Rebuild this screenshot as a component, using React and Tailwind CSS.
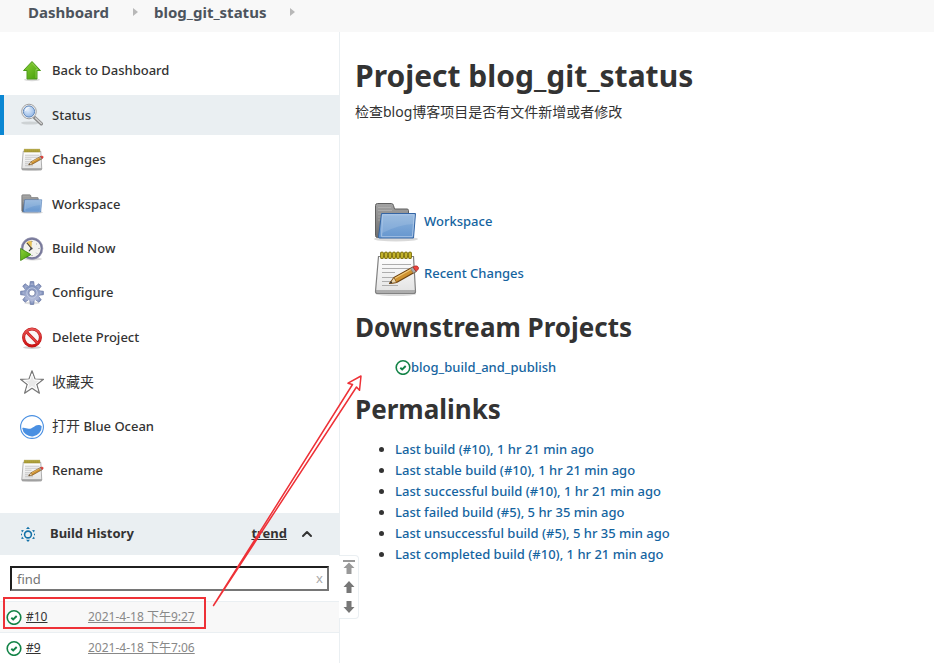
import { ChevronUp } from "lucide-react";

const TASKS = [
  { label: "Back to Dashboard", icon: UpArrowIcon },
  { label: "Status", icon: SearchIcon, active: true },
  { label: "Changes", icon: NotepadIcon },
  { label: "Workspace", icon: FolderIcon },
  { label: "Build Now", icon: ClockIcon },
  { label: "Configure", icon: GearIcon },
  { label: "Delete Project", icon: DeleteIcon },
  { zh: "收藏夹", label: "", icon: StarIcon },
  { zh: "打开", label: " Blue Ocean", icon: OceanIcon },
  { label: "Rename", icon: NotepadIcon },
];

const BUILDS = [
  { id: "#10", date: "2021-4-18 下午9:27" },
  { id: "#9", date: "2021-4-18 下午7:06" },
];

const PERMALINKS = [
  "Last build (#10), 1 hr 21 min ago",
  "Last stable build (#10), 1 hr 21 min ago",
  "Last successful build (#10), 1 hr 21 min ago",
  "Last failed build (#5), 5 hr 35 min ago",
  "Last unsuccessful build (#5), 5 hr 35 min ago",
  "Last completed build (#10), 1 hr 21 min ago",
];

// Shared gradients, referenced by id from the icons below
function IconDefs() {
  return (
    <svg width="0" height="0" className="absolute" aria-hidden="true">
      <defs>
        <linearGradient id="green" x1="0" y1="0" x2="1" y2="1">
          <stop offset="0" stopColor="#8fd33a" />
          <stop offset="1" stopColor="#3f9a06" />
        </linearGradient>
        <linearGradient id="paper" x1="0" y1="0" x2="0" y2="1">
          <stop offset="0" stopColor="#ffffff" />
          <stop offset="1" stopColor="#e2e2e2" />
        </linearGradient>
        <linearGradient id="folderFront" x1="0" y1="0" x2="0" y2="1">
          <stop offset="0" stopColor="#8fb4dc" />
          <stop offset="1" stopColor="#6596cf" />
        </linearGradient>
        <linearGradient id="folderBack" x1="0" y1="0" x2="0" y2="1">
          <stop offset="0" stopColor="#a3a3a3" />
          <stop offset="1" stopColor="#6d6d6d" />
        </linearGradient>
        <linearGradient id="gear" x1="0" y1="0" x2="0" y2="1">
          <stop offset="0" stopColor="#7c8fba" />
          <stop offset="1" stopColor="#b4bcda" />
        </linearGradient>
        <linearGradient id="red" x1="0" y1="0" x2="0" y2="1">
          <stop offset="0" stopColor="#e65252" />
          <stop offset="1" stopColor="#cf1212" />
        </linearGradient>
        <radialGradient id="lens" cx="0.4" cy="0.35" r="0.7">
          <stop offset="0" stopColor="#e6f0fc" />
          <stop offset="1" stopColor="#8fb5e6" />
        </radialGradient>
      </defs>
    </svg>
  );
}

function UpArrowIcon({ className }) {
  return (
    <svg viewBox="0 0 24 24" className={className}>
      <ellipse cx="12" cy="20.8" rx="8" ry="1.5" fill="#000" opacity="0.15" />
      <path d="M12 2.500 20.500 11.500H17V20H7v-8.500H3.500z" fill="url(#green)" stroke="#4e9a1c" strokeLinejoin="round" />
      <path d="M12 4.200 18 10.500h-2V19" fill="none" stroke="#b7e682" strokeWidth="0.7" opacity="0.7" />
    </svg>
  );
}

function SearchIcon({ className }) {
  return (
    <svg viewBox="0 0 24 24" className={className}>
      <ellipse cx="10" cy="20" rx="9" ry="1.6" fill="#000" opacity="0.12" />
      <path d="m14.500 14.500 6.800 6.300" stroke="#858585" strokeWidth="3.4" strokeLinecap="round" />
      <path d="m15.500 15 5.800 5.500" stroke="#d0d0d0" strokeWidth="1.6" strokeLinecap="round" />
      <circle cx="9" cy="8.500" r="7.300" fill="#f3f3f3" stroke="#a2a2a2" />
      <circle cx="9" cy="8.500" r="5.600" fill="url(#lens)" stroke="#5f86b8" />
      <path d="M5.500 8a4 4 0 0 1 4-3.500" fill="none" stroke="#fff" strokeWidth="1.2" opacity="0.8" />
    </svg>
  );
}

function NotepadIcon({ className }) {
  return (
    <svg viewBox="0 0 48 48" className={className}>
      <ellipse cx="24" cy="44" rx="20" ry="2" fill="#000" opacity="0.15" />
      <path d="M6.500 6.500h35l2 35q0 2-2 2h-36q-2 0-2-2z" fill="url(#paper)" stroke="#808080" strokeWidth="1.200" />
      <path d="M4 40h39.500v2q0 1.500-2 1.500h-36q-2 0-2-1.500z" fill="#888" opacity="0.6" />
      <path d="M10 14.500h29M10 18.500h29M10 22.500h13M10 27.500h20M10 31.500h11M10 35.500h16" stroke="#adadad" strokeWidth="1.200" />
      {[9, 13, 17, 21, 25, 29, 33, 37].map((x) => (
        <rect key={x} x={x - 0.3} y="2" width="2.600" height="6.500" rx="1.300" fill="#e3d23a" stroke="#7d6f08" strokeWidth="1.200" />
      ))}
      <path d="m17.500 33.500 4.500-6 19-10.500 3 4.500-19.500 11z" fill="#cf9230" stroke="#6d4312" strokeWidth="1.200" strokeLinejoin="round" />
      <path d="m22.500 28.500 18-10" stroke="#f0c878" strokeWidth="1.300" />
      <path d="m17.500 33.500 4.500-6 2.500 5z" fill="#ead7ae" stroke="#805019" strokeWidth="0.700" />
      <path d="m17.500 33.500 1.800-2.400.9 1.800z" fill="#333" />
      <path d="m38.500 18.500 2.500-1.400 3 4.400-2.600 1.500z" fill="#aaa" stroke="#777" strokeWidth="0.600" />
      <path d="m41 17 2-1q2.800-.7 3.600 1.800.4 1.800-2.600 3.500z" fill="#ee443c" stroke="#a22525" strokeWidth="0.700" />
    </svg>
  );
}

function FolderIcon({ className }) {
  return (
    <svg viewBox="0 0 48 48" className={className}>
      <ellipse cx="24" cy="41" rx="22" ry="2.500" fill="#000" opacity="0.15" />
      <path d="M3.500 7.500q0-2 2-2h14q1.500 0 2 2l1 3.500h12.500q1.500 0 1.500 1.500v27h-31q-2 0-2-2z" fill="url(#folderBack)" stroke="#5f5f5f" />
      <path d="M6 9.500h13M6 12.500h14M6 16h29M6 19h5M6 22h2" stroke="#c2c2c2" strokeWidth="0.700" opacity="0.7" />
      <path d="M9.500 15.500h34l-2 24.500h-34q-1 0-1-1z" fill="url(#folderFront)" stroke="#3465a4" strokeLinejoin="round" />
      <path d="M10.500 16.700h31.700l-1.800 22H9.600z" fill="none" stroke="#b5cdea" strokeWidth="0.800" />
      <path d="M11 17h31l-.8 9q-14 .5-31 9z" fill="#fff" opacity="0.120" />
    </svg>
  );
}

function ClockIcon({ className }) {
  return (
    <svg viewBox="0 0 24 24" className={className}>
      <ellipse cx="13" cy="22" rx="9" ry="1.500" fill="#000" opacity="0.15" />
      <circle cx="12" cy="11.500" r="9.800" fill="#f3f3ee" stroke="#77789a" strokeWidth="2.200" />
      <circle cx="12" cy="11.500" r="10.900" fill="none" stroke="#9c9cb4" strokeWidth="0.600" />
      <path d="M11.500 11 6 6q2.500-2.500 6-2.200z" fill="#e7c35a" />
      <path d="M12 4v1M12 18v1M18.500 11.500h1M17 6.500l-.7.700M17 16.500l-.7-.7" stroke="#888" />
      <path d="m7 6 4.500 5.500-2.500 2.500" fill="none" stroke="#444" strokeWidth="1.100" />
      <circle cx="11.500" cy="11.500" r="1.100" fill="#444" />
      <path d="m.6 11.500 10.400 6L.6 23.500z" fill="url(#green)" stroke="#388307" strokeWidth="0.800" strokeLinejoin="round" />
    </svg>
  );
}

function GearIcon({ className }) {
  return (
    <svg viewBox="0 0 24 24" className={className}>
      <ellipse cx="12" cy="22" rx="8" ry="1.500" fill="#000" opacity="0.12" />
      {[0, 45, 90, 135, 180, 225, 270, 315].map((deg) => (
        <path key={deg} d="M9.800 5 10.300.6h3.400L14.200 5z" transform={`rotate(${deg} 12 12)`} fill="url(#gear)" stroke="#6674a0" strokeWidth="0.700" />
      ))}
      <circle cx="12" cy="12" r="8" fill="url(#gear)" />
      <circle cx="12" cy="12" r="5.200" fill="none" stroke="#c8d0e6" strokeWidth="0.800" />
      <circle cx="12" cy="12" r="3.200" fill="#fff" stroke="#707da5" strokeWidth="0.900" />
    </svg>
  );
}

function DeleteIcon({ className }) {
  return (
    <svg viewBox="0 0 24 24" className={className}>
      <ellipse cx="12" cy="21.500" rx="9" ry="1.500" fill="#000" opacity="0.18" />
      <circle cx="12" cy="11.500" r="8.400" fill="#faf6f6" stroke="#b91414" strokeWidth="3" />
      <path d="m6.300 5.800 11.400 11.400" stroke="#c51616" strokeWidth="3" />
      <circle cx="12" cy="11.500" r="8.400" fill="none" stroke="url(#red)" strokeWidth="2" />
      <path d="m6.300 5.800 11.400 11.400" stroke="#e04040" strokeWidth="1.900" />
    </svg>
  );
}

function StarIcon({ className }) {
  return (
    <svg viewBox="0 0 24 24" className={className}>
      <path
        d="m12 .8 3 8.200 8.500.3-6.700 5.200 2.600 8.700L12 18.300l-7.400 4.900 2.600-8.700L.5 9.300 9 9z"
        fill="#f4f4f4"
        stroke="#777"
        strokeWidth="1.200"
        strokeLinejoin="round"
      />
      <path d="m12 4 2.200 6 6 .4-4.800 3.800 1.700 5.700L12 16.500l-5.100 3.400 1.700-5.700-4.800-3.800 6-.4z" fill="#e9e9e9" stroke="#fff" strokeWidth="0.900" />
    </svg>
  );
}

function OceanIcon({ className }) {
  return (
    <svg viewBox="0 0 24 24" className={className}>
      <circle cx="12" cy="12" r="11.400" fill="#fff" stroke="#4a90e2" strokeWidth="1.100" />
      <path d="M2.200 13c2.500-.8 4 .7 6.500.8 4 .2 6-3.800 9.500-3.800 1.600 0 2.700.6 3.500 1.200A9.800 9.800 0 0 1 2.200 13z" fill="#4a90e2" />
    </svg>
  );
}

function SuccessIcon() {
  return (
    <svg viewBox="0 0 16 16" className="size-4 shrink-0" role="img" aria-label="Success">
      <circle cx="8" cy="8.500" r="6.800" fill="#fff" stroke="#138347" strokeWidth="1.600" />
      <path d="m5.300 8.700 1.900 1.800 3.500-3.500" fill="none" stroke="#138347" strokeWidth="1.900" />
    </svg>
  );
}

function WeatherIcon() {
  return (
    <svg viewBox="0 0 16 16" className="size-4 shrink-0">
      <circle cx="8" cy="8.500" r="3.400" fill="none" stroke="#1572a8" strokeWidth="1.600" />
      <path d="m8 .8 2 2.200H6zM8 16l2-2.200H6z" fill="#1572a8" />
      <path d="M1.300 4 4 4.300 2 6.500zM14.700 4 12 4.300l2 2.200zM1.300 13 4 12.700l-2-2.200zM14.700 13l-2.700-.3 2-2.200z" fill="#1572a8" />
      <path d="M1.500 7.700v1.600M14.500 7.700v1.600" stroke="#1572a8" />
    </svg>
  );
}

function PageButton({ label, variant }) {
  return (
    <button type="button" aria-label={label} className="block">
      <svg viewBox="0 0 12 14" className={variant === "top" ? "h-3.5 w-3 text-[#999]" : "h-3.5 w-3 text-[#777]"} fill="currentColor">
        {variant === "top" && <path d="M0 0h12v2H0zM6 2.500l5.500 5.500H8.500v6h-5V8H.5z" />}
        {variant === "up" && <path d="m6 1 5.500 6H8.500v6h-5V7H.5z" />}
        {variant === "down" && <path d="m6 13 5.500-6H8.500V1h-5v6H.5z" />}
      </svg>
    </button>
  );
}

function Breadcrumbs() {
  return (
    <nav className="flex h-8 items-start bg-[#f8f8f8] pl-7 text-[15px] font-bold text-[#4d545d]">
      <a href="#dashboard" className="leading-6">Dashboard</a>
      <Separator />
      <a href="#job" className="leading-6">blog_git_status</a>
      <Separator />
    </nav>
  );
}

function Separator() {
  return (
    <svg viewBox="0 0 5 8" className="ml-6 mr-4 mt-2 h-2 w-[5px]" fill="#b8b8b8">
      <path d="M0 0v8l5-4z" />
    </svg>
  );
}

function BuildHistory() {
  return (
    <section className="mt-[22px]">
      <div className="relative flex h-[42px] items-center bg-[#eaeff2] pl-5 pr-6 font-bold">
        <WeatherIcon />
        <h2 className="ml-3.5">Build History</h2>
        <a href="#trend" className="ml-auto underline">trend</a>
        <button type="button" aria-label="Collapse" className="ml-3">
          <ChevronUp size={16} strokeWidth={3} />
        </button>
        <div className="absolute left-full top-full flex h-16 w-5 flex-col items-center justify-center gap-1.5 rounded-r border border-l-0 border-[#eaeff2] bg-white">
          <PageButton label="Newest" variant="top" />
          <PageButton label="Newer" variant="up" />
          <PageButton label="Older" variant="down" />
        </div>
      </div>
      <div className="relative mx-2.5 mb-2.5 mt-[11px]">
        <input
          type="text"
          placeholder="find"
          aria-label="find"
          className="block h-[25px] w-full border-2 border-b-[#767676] border-l-[#1f1f1f] border-r-[#767676] border-t-[#1f1f1f] pl-[5px] font-normal placeholder:text-[#757575]"
        />
        <button type="button" aria-label="Clear" className="absolute right-1.5 top-0 text-[13px] font-normal leading-6 text-[#aaa]">
          x
        </button>
      </div>
      <table className="w-full border-collapse text-xs font-normal">
        <tbody>
          {BUILDS.map((build) => (
            <tr key={build.id} className="h-[31px] border-t border-[#eaeff2] odd:bg-[#f8f8f8]">
              <td className="w-[88px] p-0 pl-1.5">
                <div className="flex items-center gap-1">
                  <SuccessIcon />
                  <a href="#build" className="underline">{build.id}</a>
                </div>
              </td>
              <td className="p-0 text-[#888]">
                <a href="#build" className="underline">{build.date}</a>
              </td>
            </tr>
          ))}
        </tbody>
      </table>
    </section>
  );
}

function Sidebar() {
  return (
    <aside className="w-[340px] shrink-0 border-r border-[#eaeff2] pt-[19px]">
      <nav className="flex h-[440px] flex-col justify-between">
        {TASKS.map(({ zh, label, icon: Icon, active }) => (
          <a
            key={zh || label}
            href="#task"
            className={
              active
                ? "flex h-10 items-center gap-2 border-l-4 border-[#0b87d3] bg-[#eaeff2] pl-4"
                : "flex h-10 items-center gap-2 pl-5"
            }
          >
            <Icon className="size-6 shrink-0" />
            <span>
              {zh && <span className="text-sm font-normal">{zh}</span>}
              {label}
            </span>
          </a>
        ))}
      </nav>
      <BuildHistory />
    </aside>
  );
}

function Main() {
  return (
    <main className="min-w-0 flex-1 pl-[15px] pr-4 pt-6">
      <h1 className="text-[30px] font-bold leading-10">Project blog_git_status</h1>
      <p className="mt-1.5 text-sm font-normal leading-5">检查blog博客项目是否有文件新增或者修改</p>
      <div className="mt-[76px] flex flex-col gap-1 pl-[17px] text-[#1564a0]">
        <a href="#workspace" className="flex items-center gap-1">
          <FolderIcon className="size-12" />
          Workspace
        </a>
        <a href="#changes" className="flex items-center gap-1">
          <NotepadIcon className="size-12" />
          Recent Changes
        </a>
      </div>
      <h2 className="mt-[11px] text-[26px] font-bold leading-9">Downstream Projects</h2>
      <ul className="mt-3 pl-10 leading-5 text-[#1564a0]">
        <li className="flex items-center">
          <SuccessIcon />
          <a href="#downstream">blog_build_and_publish</a>
        </li>
      </ul>
      <h2 className="mt-3.5 text-[26px] font-bold leading-9">Permalinks</h2>
      <ul className="mt-3 list-disc pl-10 leading-[21px]">
        {PERMALINKS.map((text) => (
          <li key={text}>
            <a href="#permalink" className="text-[#1564a0]">{text}</a>
          </li>
        ))}
      </ul>
    </main>
  );
}

export default function App() {
  return (
    <div className="relative bg-white font-['Noto_Sans','Noto_Sans_CJK_SC',sans-serif] text-[13px] font-medium text-[#333]">
      <IconDefs />
      <Breadcrumbs />
      <div className="flex">
        <Sidebar />
        <Main />
      </div>
      {/* Highlight box and arrow over the latest build */}
      <svg viewBox="0 0 370 270" className="pointer-events-none absolute left-0 top-[370px] h-[270px] w-[370px]" fill="none" stroke="#ee3137">
        <rect x="4" y="228" width="201" height="30" strokeWidth="2" />
        <path d="M213.500 235.500 352.500 14.500 348 13.200 361 6 359.500 20.300 356.500 17z" strokeWidth="1.500" strokeLinejoin="round" />
      </svg>
    </div>
  );
}
